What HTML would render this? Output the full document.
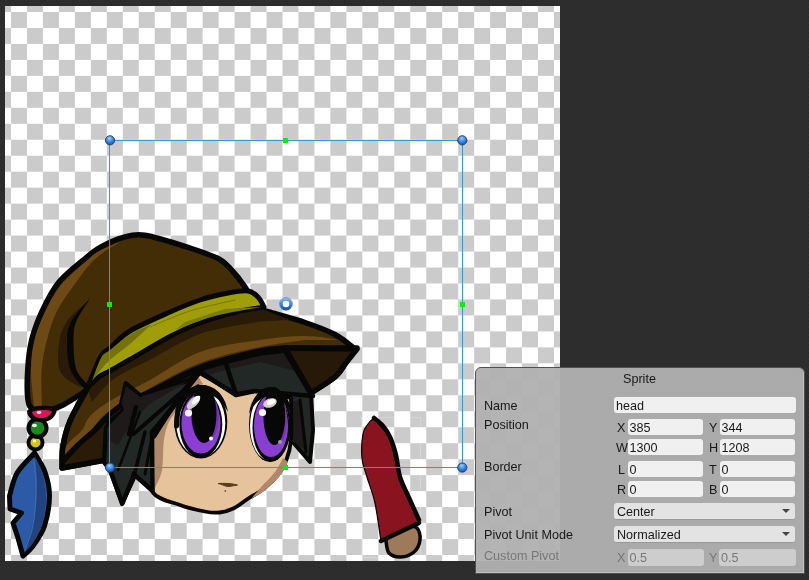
<!DOCTYPE html>
<html><head><meta charset="utf-8">
<style>
*{margin:0;padding:0;box-sizing:border-box}
html,body{width:809px;height:580px;overflow:hidden}
body{position:relative;font-family:"Liberation Sans",sans-serif;
background:#2d2d2d;
background-image:repeating-linear-gradient(45deg,#2f2f2f 0px,#2f2f2f 1.5px,#2a2a2a 1.5px,#2a2a2a 2.83px);}
#checker{position:absolute;left:5px;top:6px;width:555px;height:555px;background:#fff}
svg{position:absolute;left:0;top:0}
#panel{position:absolute;left:475px;top:367px;width:330px;height:207px;
background:rgba(177,177,177,0.955);border:1px solid #505050;border-radius:6px 6px 0 0;box-shadow:inset -1px -1px 0 rgba(255,255,255,0.25)}
#ui{position:absolute;left:0;top:0;width:809px;height:580px;font-size:12.6px;color:#181818}
.t{position:absolute;white-space:nowrap;line-height:14px;transform:translateZ(0)}
.dis{color:#777}
.f{position:absolute;background:#f0f0f0;border-radius:3px}
.fd{background:#cdcdcd}
.dd{position:absolute;background:#e3e3e3;border-radius:3px;border-bottom:1px solid #999}
.arr{position:absolute;width:0;height:0;border-left:4px solid transparent;border-right:4px solid transparent;border-top:4.5px solid #444}
</style></head><body>
<svg width="809" height="580" viewBox="0 0 809 580">
 <defs><pattern id="ck" patternUnits="userSpaceOnUse" x="282.5" y="283.5" width="31.94" height="31.94"><rect width="31.94" height="31.94" fill="#fff"/><rect width="15.97" height="15.97" fill="#cbcbcb"/><rect x="15.97" y="15.97" width="15.97" height="15.97" fill="#cbcbcb"/></pattern></defs>
 <rect x="5" y="6" width="555" height="555" fill="url(#ck)"/>
 <!--CHAR-->
<path d="M104.0,462.0 L104.0,426.0 L124.0,411.0 L150.0,394.0 C158.3,389.7 181.7,375.0 200.0,368.0 C218.3,361.0 250.0,354.7 260.0,352.0 L285.0,349.0 L311.0,393.0 L313.0,430.0 C312.5,435.3 310.5,456.7 310.0,462.0 L291.0,440.0 L260.0,440.0 L200.0,460.0 L160.0,470.0 L135.0,476.0 L122.0,504.0 L110.0,470.0 Z" fill="#222826" stroke="#070806" stroke-width="4" stroke-linejoin="round" stroke-linecap="round" />
<path d="M291.0,402.0 L300.0,400.0 L305.0,450.0 L291.0,440.0 Z" fill="#1d1a19" />
<path d="M300,400 L306,452" fill="none" stroke="#070806" stroke-width="3" stroke-linejoin="round" stroke-linecap="round"/>
<path d="M150.0,394.0 C158.3,389.7 181.7,375.0 200.0,368.0 C218.3,361.0 245.8,355.2 260.0,352.0 C274.2,348.8 280.8,349.5 285.0,349.0 L300.0,372.0 L260.0,362.0 C250.0,364.7 216.7,371.0 200.0,378.0 C183.3,385.0 169.2,395.3 160.0,404.0 C150.8,412.7 147.5,425.7 145.0,430.0 Z" fill="#1d1a19" />
<path d="M152.0,432.0 C153.0,430.8 154.2,429.7 158.0,425.0 C161.8,420.3 168.3,412.8 175.0,404.0 C181.7,395.2 194.2,377.3 198.0,372.0 L236,394 L255,391 L291,398 291.0,398.0 C291.0,405.0 291.8,429.5 291.0,440.0 C290.2,450.5 288.3,455.0 286.0,461.0 C283.7,467.0 281.0,471.2 277.0,476.0 C273.0,480.8 266.7,486.3 262.0,490.0 C257.3,493.7 253.6,495.0 249.0,498.0 C244.4,501.0 239.3,505.6 234.4,508.0 C229.5,510.4 224.6,511.9 219.6,512.5 C214.6,513.1 211.3,512.8 204.7,511.5 C198.1,510.2 188.7,508.2 180.0,505.0 C171.3,501.8 157.3,499.5 152.6,492.0 C147.9,484.5 152.1,470.0 152.0,460.0 C151.9,450.0 152.0,436.7 152.0,432.0 Z" fill="#e6c39a" stroke="#070806" stroke-width="3.8" stroke-linejoin="round" stroke-linecap="round" />
<path d="M154.0,432.0 C155.0,431.0 156.3,430.3 160.0,426.0 C163.7,421.7 169.7,414.3 176.0,406.0 C182.3,397.7 194.3,381.0 198.0,376.0 L203.0,384.0 L185.0,402.0 C182.5,405.0 173.5,413.7 170.0,420.0 C166.5,426.3 165.3,431.7 164.0,440.0 C162.7,448.3 163.5,462.0 162.0,470.0 C160.5,478.0 156.2,485.0 155.0,488.0 Z" fill="#b08868" />
<path d="M288.0,462.0 C286.5,464.5 283.0,472.2 279.0,477.0 C275.0,481.8 268.7,487.3 264.0,491.0 C259.3,494.7 253.2,497.7 251.0,499.0 L262.0,486.0 C264.2,483.7 271.5,476.7 275.0,472.0 C278.5,467.3 281.7,460.3 283.0,458.0 Z" fill="#b08868" />
<path d="M199,371 L236,395 L255,391 L313,396" fill="none" stroke="#070806" stroke-width="4.5" stroke-linejoin="round" stroke-linecap="round"/>
<path d="M226,364 L236,394" fill="none" stroke="#070806" stroke-width="4.5" stroke-linejoin="round" stroke-linecap="round"/>
<ellipse cx="200.8" cy="422" rx="26.5" ry="36.5" fill="#070806"/>
<ellipse cx="200.8" cy="423" rx="24.5" ry="34" fill="#fff"/>
<ellipse cx="200.8" cy="424.5" rx="21.5" ry="33.5" fill="#070806"/>
<ellipse cx="201" cy="423.5" rx="19.5" ry="30" fill="#8b3fd2"/>
<ellipse cx="205" cy="417" rx="14" ry="25" fill="#7433b8"/>
<ellipse cx="204" cy="414" rx="12.5" ry="29" fill="#070806"/>
<path d="M175,412 C178,394 190,385 202,385 C214,385 225,394 228,412 C222,400 212,393 202,393 C190,393 181,400 175,412 Z" fill="#070806" />
<path d="M176.5,426.0 C176.8,423.3 176.9,415.0 178.5,410.0 C180.1,405.0 182.8,399.8 186.0,396.0 C189.2,392.2 196.0,388.5 198.0,387.0" fill="none" stroke="#070806" stroke-width="5" stroke-linejoin="round" stroke-linecap="round"/>
<ellipse cx="193.5" cy="402.5" rx="8.5" ry="4" fill="#cfcfcf" transform="rotate(-45 193.5 402.5)"/>
<ellipse cx="196" cy="400" rx="5.5" ry="2.5" fill="#fff" transform="rotate(-45 196 400)"/>
<circle cx="188.5" cy="413" r="3.6" fill="#fff"/>
<circle cx="211" cy="438.5" r="2" fill="#fff"/>
<ellipse cx="270" cy="424.5" rx="21" ry="37.5" fill="#070806"/>
<ellipse cx="269.5" cy="426" rx="19.5" ry="34.5" fill="#fff"/>
<ellipse cx="271" cy="427.5" rx="18.5" ry="34" fill="#070806"/>
<ellipse cx="271" cy="426" rx="17" ry="31" fill="#8b3fd2"/>
<ellipse cx="276" cy="420" rx="11" ry="25" fill="#7433b8"/>
<ellipse cx="274.3" cy="416" rx="10.9" ry="29" fill="#070806"/>
<path d="M249,414 C251,398 260,388 271,388 C282,388 290,398 292,414 C286,403 280,396 271,396 C262,396 254,403 249,414 Z" fill="#070806" />
<ellipse cx="270" cy="403" rx="7" ry="4.5" fill="#cfcfcf" transform="rotate(-20 270 403)"/>
<ellipse cx="271" cy="402" rx="4.5" ry="2.5" fill="#fff" transform="rotate(-20 271 402)"/>
<circle cx="262.5" cy="412.5" r="3.6" fill="#fff"/>
<circle cx="280" cy="442" r="2" fill="#9a9a9a"/>
<path d="M218,483.5 C222,484 226,487 229,486.5 C232,486 235,485.5 237.5,485 C232,483.5 226,483 218,483.5 Z" fill="#5a3a20" stroke="#5a3a20" stroke-width="1"/>
<circle cx="225.3" cy="491" r="0.9" fill="#7a5a40"/>
<path d="M50.0,410.0 C47.2,409.8 37.2,410.7 33.5,409.0 C29.8,407.3 29.0,406.5 28.0,400.0 C27.0,393.5 27.1,380.0 27.7,370.0 C28.3,360.0 29.3,349.8 31.7,340.0 C34.1,330.2 37.7,320.7 42.2,311.0 C46.8,301.3 51.6,290.9 59.0,282.0 C66.3,273.1 79.3,263.3 86.3,257.5 C93.3,251.7 95.0,250.3 101.0,247.0 C107.0,243.7 115.2,239.7 122.5,237.7 C129.8,235.7 133.6,233.5 144.8,235.2 C156.1,236.9 177.6,244.0 190.0,248.0 C202.4,252.0 212.1,255.3 219.0,259.0 C225.9,262.7 227.3,265.4 231.6,270.0 C235.9,274.6 240.5,280.3 244.7,286.5 C248.9,292.7 254.9,303.6 257.0,307.0 L90.0,386.0 L84.0,392.0 C80.5,394.2 68.7,402.0 63.0,405.0 C57.3,408.0 52.2,409.2 50.0,410.0 Z" fill="#432d06" stroke="#070806" stroke-width="5.5" stroke-linejoin="round" stroke-linecap="round" />
<path d="M34.0,407.0 C33.5,400.8 30.9,381.2 31.0,370.0 C31.1,358.8 32.2,349.5 34.5,340.0 C36.8,330.5 40.1,322.2 44.5,313.0 C48.9,303.8 53.8,293.8 61.0,285.0 C68.2,276.2 81.0,265.8 87.5,260.0 C94.0,254.2 94.2,253.7 100.0,250.5 C105.8,247.3 118.3,242.6 122.0,241.0 L105.0,251.0 C102.7,253.0 95.7,258.0 91.0,263.0 C86.3,268.0 82.7,273.0 77.0,281.0 C71.3,289.0 62.0,301.2 57.0,311.0 C52.0,320.8 49.6,330.2 47.0,340.0 C44.4,349.8 42.4,359.0 41.6,370.0 C40.8,381.0 41.9,400.0 42.0,406.0 Z" fill="#6d4915" />
<path d="M89.0,300.0 C85.5,303.3 72.9,313.3 68.0,320.0 C63.1,326.7 60.9,331.7 59.5,340.0 C58.1,348.3 56.8,362.5 59.5,370.0 C62.2,377.5 71.2,382.2 76.0,385.0 C80.8,387.8 86.0,386.7 88.0,387.0 L73.7,370.0 C73.1,365.0 70.1,348.3 70.0,340.0 C69.9,331.7 69.8,326.7 73.0,320.0 C76.2,313.3 86.3,303.3 89.0,300.0 Z" fill="#2a1b08" />
<path d="M90.5,298.0 C87.4,301.7 75.9,313.0 72.0,320.0 C68.1,327.0 67.2,331.7 67.0,340.0 C66.8,348.3 67.3,361.7 70.5,370.0 C73.7,378.3 82.8,387.2 86.0,390.0 C89.2,392.8 91.6,390.3 90.0,387.0 C88.4,383.7 79.2,377.8 76.5,370.0 C73.8,362.2 73.5,348.2 73.5,340.0 C73.5,331.8 73.7,328.0 76.5,321.0 C79.3,314.0 88.2,301.8 90.5,298.0" fill="#070806" />
<path d="M62.0,468.0 C62.2,464.3 61.7,453.8 63.0,446.0 C64.3,438.2 65.8,430.8 70.0,421.0 C74.2,411.2 85.0,392.7 88.0,387.0 L110.0,370.0 C113.3,368.0 120.0,363.8 130.0,358.0 C140.0,352.2 158.3,341.0 170.0,335.0 C181.7,329.0 188.3,326.3 200.0,322.0 C211.7,317.7 230.3,311.2 240.0,309.0 C249.7,306.8 255.0,309.0 258.0,309.0 L269.0,312.0 C275.0,313.8 294.0,318.8 305.0,322.5 C316.0,326.2 326.7,330.1 335.0,334.5 C343.3,338.9 351.7,346.6 355.0,349.0 L345.0,364.0 C343.3,366.2 340.7,372.2 335.0,377.0 C329.3,381.8 315.0,390.3 311.0,393.0 L285.0,350.0 L260.0,353.0 C250.0,355.7 218.3,362.2 200.0,369.0 C181.7,375.8 162.7,387.0 150.0,394.0 C137.3,401.0 128.3,408.2 124.0,411.0 L104.0,426.0 L104.0,460.0 Z" fill="#432d06" stroke="#070806" stroke-width="5.5" stroke-linejoin="round" stroke-linecap="round" />
<path d="M88.0,390.0 C91.5,386.9 102.0,376.6 109.0,371.5 C116.0,366.4 119.8,365.3 130.0,359.5 C140.2,353.7 158.3,342.6 170.0,336.5 C181.7,330.4 188.3,327.3 200.0,323.0 C211.7,318.7 229.7,312.8 240.0,310.5 C250.3,308.2 258.3,309.2 262.0,309.0 L290.0,320.0 L260.0,321.6 C250.0,323.7 218.3,327.6 200.0,334.0 C181.7,340.4 161.7,353.8 150.0,359.7 C138.3,365.6 136.7,365.9 130.0,369.6 C123.3,373.3 116.3,376.6 110.0,382.0 C103.7,387.4 95.0,398.7 92.0,402.0 Z" fill="#2a1b08" />
<path d="M63.0,458.0 C63.7,455.8 63.8,449.7 67.0,445.0 C70.2,440.3 78.0,435.0 82.0,430.0 C86.0,425.0 85.5,420.3 91.0,415.0 C96.5,409.7 105.2,403.8 115.0,398.0 C124.8,392.2 135.8,387.7 150.0,380.0 C164.2,372.3 181.7,358.7 200.0,352.0 C218.3,345.3 242.5,342.7 260.0,340.0 C277.5,337.3 291.7,336.0 305.0,336.0 C318.3,336.0 334.2,339.3 340.0,340.0 L305.0,340.0 C297.5,341.2 277.5,343.2 260.0,347.0 C242.5,350.8 218.3,356.2 200.0,363.0 C181.7,369.8 162.7,381.3 150.0,388.0 C137.3,394.7 131.7,398.5 124.0,403.0 C116.3,407.5 109.5,410.5 104.0,415.0 C98.5,419.5 95.8,425.0 91.0,430.0 C86.2,435.0 79.5,440.0 75.0,445.0 C70.5,450.0 65.8,457.5 64.0,460.0 Z" fill="#6d4915" />
<path d="M64.0,460.0 L78.0,445.0 L95.0,430.0 L106.0,422.0 L106.0,460.0 L62.0,469.0 Z" fill="#2a1b08" />
<path d="M64.0,460.0 C66.3,457.5 72.8,450.0 78.0,445.0 C83.2,440.0 89.8,435.0 95.0,430.0 C100.2,425.0 104.2,419.3 109.0,415.0 C113.8,410.7 117.2,407.8 124.0,404.0 C130.8,400.2 137.3,398.1 150.0,392.0 C162.7,385.9 181.7,374.3 200.0,367.5 C218.3,360.7 245.8,354.2 260.0,351.0 C274.2,347.8 280.8,348.5 285.0,348.0 L357,348" fill="none" stroke="#070806" stroke-width="5.5" stroke-linejoin="round" stroke-linecap="round"/>
<path d="M88.0,387.0 C85.0,392.7 74.2,411.2 70.0,421.0 C65.8,430.8 64.3,438.2 63.0,446.0 C61.7,453.8 62.2,464.3 62.0,468.0 L106,460" fill="none" stroke="#070806" stroke-width="5.5" stroke-linejoin="round" stroke-linecap="round"/>
<path d="M285.0,348.0 L357.0,349.0 L345.0,364.0 C343.3,366.2 340.7,372.2 335.0,377.0 C329.3,381.8 315.0,390.3 311.0,393.0 Z" fill="#261907" stroke="#070806" stroke-width="5.5" stroke-linejoin="round" stroke-linecap="round" />
<path d="M89.0,384.0 C91.0,379.3 97.5,362.0 101.0,356.0 C104.5,350.0 105.2,352.2 110.0,348.0 C114.8,343.8 120.0,337.0 130.0,331.0 C140.0,325.0 158.3,317.2 170.0,312.0 C181.7,306.8 190.3,303.2 200.0,300.0 C209.7,296.8 220.0,294.5 228.0,293.0 C236.0,291.5 243.0,290.3 248.0,291.0 C253.0,291.7 255.3,294.3 258.0,297.0 C260.7,299.7 263.0,305.3 264.0,307.0 L240.0,311.0 C233.3,313.0 211.7,318.8 200.0,323.0 C188.3,327.2 181.7,330.4 170.0,336.5 C158.3,342.6 140.2,353.7 130.0,359.5 C119.8,365.3 114.0,368.8 109.0,371.5 C104.0,374.2 103.0,373.9 100.0,376.0 C97.0,378.1 92.5,382.7 91.0,384.0 Z" fill="#9f9d08" stroke="#070806" stroke-width="5" stroke-linejoin="round" stroke-linecap="round" />
<path d="M92.0,381.0 C93.5,377.2 98.0,363.2 101.0,358.0 C104.0,352.8 105.2,353.9 110.0,350.0 C114.8,346.1 123.0,338.8 130.0,334.5 C137.0,330.2 148.3,325.8 152.0,324.0 L130.0,344.0 C126.7,346.7 115.2,355.3 110.0,360.0 C104.8,364.7 102.0,368.5 99.0,372.0 C96.0,375.5 93.2,379.5 92.0,381.0 Z" fill="#74720a" />
<path d="M175.0,330.0 C181.7,327.7 200.5,319.8 215.0,316.0 C229.5,312.2 254.2,308.5 262.0,307.0 L225.0,309.0 C218.3,311.2 191.7,319.8 185.0,322.0 Z" fill="#7e7c08" />
<path d="M150.0,327.0 C156.7,324.3 175.8,315.5 190.0,311.0 C204.2,306.5 227.5,301.8 235.0,300.0" fill="none" stroke="#7a7808" stroke-width="1" stroke-linejoin="round" stroke-linecap="round"/>
<path d="M104.0,462.0 L106.0,428.0 L124.7,409.0 L121.3,403.5 L125.8,383.4 L140.4,395.7 L189.7,380.0 L200.0,372.0 L175.0,404.0 L158.0,425.0 L152.0,432.0 L152.6,491.0 L133.6,474.0 L132.5,478.7 L122.4,503.3 L110.0,470.0 Z" fill="#222826" stroke="#070806" stroke-width="4.5" stroke-linejoin="round" stroke-linecap="round" />
<path d="M107.0,428.0 L124.0,410.0 L121.5,403.0 L126.0,386.0 L140.0,397.0 L186.0,382.0 L150.0,404.0 L133.0,420.0 L118.0,445.0 L107.0,440.0 Z" fill="#1d1a19" />
<path d="M136,407 L129,434" fill="none" stroke="#070806" stroke-width="4.5" stroke-linejoin="round" stroke-linecap="round"/>
<path d="M145,432 L134,476" fill="none" stroke="#070806" stroke-width="3.5" stroke-linejoin="round" stroke-linecap="round"/>
<path d="M153,432 L145,474" fill="none" stroke="#070806" stroke-width="3" stroke-linejoin="round" stroke-linecap="round"/>
<path d="M133.6,434 L187.4,387" fill="none" stroke="#070806" stroke-width="4" stroke-linejoin="round" stroke-linecap="round"/>
<path d="M154.0,436.0 C156.0,432.8 161.3,424.0 166.0,417.0 C170.7,410.0 176.7,401.5 182.0,394.0 C187.3,386.5 195.3,375.7 198.0,372.0" fill="none" stroke="#070806" stroke-width="5" stroke-linejoin="round" stroke-linecap="round"/>
<path d="M140,412 L118,470" fill="none" stroke="#070806" stroke-width="2.5" stroke-linejoin="round" stroke-linecap="round"/>
<!--/CHAR-->
<!--EXTRA-->
<path d="M34.5,453.0 C36.2,456.2 42.5,464.8 45.0,472.0 C47.5,479.2 49.6,487.0 49.5,496.0 C49.4,505.0 47.2,517.7 44.5,526.0 C41.8,534.3 36.6,541.0 33.0,546.0 C29.4,551.0 24.7,554.3 23.0,556.0 L18.0,538.0 C17.2,535.5 13.8,525.5 13.0,523.0 L21.5,513.0 L10.0,509.0 L9.5,496.0 C10.8,492.2 12.8,480.2 17.0,473.0 C21.2,465.8 31.6,456.3 34.5,453.0 Z" fill="#2d5aa6" stroke="#070806" stroke-width="5" stroke-linejoin="round" stroke-linecap="round"/>
<path d="M35.0,456.0 C36.3,459.2 41.2,467.7 43.0,475.0 C44.8,482.3 46.2,491.7 46.0,500.0 C45.8,508.3 44.2,517.8 42.0,525.0 C39.8,532.2 36.0,538.3 33.0,543.0 C30.0,547.7 25.5,551.3 24.0,553.0 L31.0,530.0 C31.8,525.8 35.0,513.3 36.0,505.0 C37.0,496.7 36.8,484.2 37.0,480.0 Z" fill="#22437e"/>
<path d="M34.0,460.0 C34.3,465.0 36.2,479.2 36.0,490.0 C35.8,500.8 34.8,515.0 33.0,525.0 C31.2,535.0 26.3,545.8 25.0,550.0" fill="none" stroke="#3a6ab8" stroke-width="1.2" stroke-linejoin="round" stroke-linecap="round"/>
<circle cx="35.5" cy="442.5" r="9" fill="#070806"/>
<circle cx="35.5" cy="442.5" r="5" fill="#d6c414"/>
<circle cx="34.5" cy="441" r="1.6" fill="#fffbc0"/>
<circle cx="37.5" cy="428" r="11" fill="#070806"/>
<circle cx="37.5" cy="428" r="6.8" fill="#1b8a1b"/>
<ellipse cx="34.5" cy="425.5" rx="2.6" ry="1.8" fill="#e8ffe8"/>
<path d="M27,411 C30,405 52,404 57,409 C56,418 49,422 42,422 C34,422 27,418 27,411 Z" fill="#070806"/>
<path d="M32,412 C36,409.5 48,409.5 52,411.5 C50,416 46,418 42,418 C36,418 33,416 32,412 Z" fill="#d8175a"/>
<ellipse cx="39" cy="412.5" rx="2.5" ry="1.4" fill="#ffd8e6"/>
<rect x="361.5" y="417.5" width="59" height="140" fill="none" stroke="#ffffff" stroke-width="1" opacity="0.22"/>
<path d="M386.0,541.0 C387.0,539.2 388.8,532.5 392.0,530.0 C395.2,527.5 400.8,526.3 405.0,526.0 C409.2,525.7 414.5,525.7 417.0,528.0 C419.5,530.3 420.5,536.0 420.0,540.0 C419.5,544.0 417.2,549.2 414.0,552.0 C410.8,554.8 405.2,556.8 401.0,557.0 C396.8,557.2 391.5,555.7 389.0,553.0 C386.5,550.3 386.5,543.0 386.0,541.0" fill="#9c7a5a" stroke="#070806" stroke-width="3.5" stroke-linejoin="round" stroke-linecap="round"/>
<path d="M381.0,541.0 C380.0,534.7 377.3,513.7 375.0,503.0 C372.7,492.3 369.2,484.5 367.0,477.0 C364.8,469.5 362.7,465.2 362.0,458.0 C361.3,450.8 362.0,439.7 363.0,434.0 C364.0,428.3 366.2,426.7 368.0,424.0 C369.8,421.3 373.0,419.0 374.0,418.0 L390.0,437.0 C391.7,443.7 395.2,463.2 400.0,477.0 C404.8,490.8 415.8,512.8 419.0,520.0 L419.0,523.0 Z" fill="#8a1320" stroke="#070806" stroke-width="1.3" stroke-linejoin="round" stroke-linecap="round"/>
<path d="M374.0,418.0 C375.5,419.3 380.3,422.8 383.0,426.0 C385.7,429.2 387.8,432.2 390.0,437.0 C392.2,441.8 394.3,448.3 396.0,455.0 C397.7,461.7 397.7,469.5 400.0,477.0 C402.3,484.5 406.8,492.8 410.0,500.0 C413.2,507.2 417.5,516.7 419.0,520.0" fill="none" stroke="#070806" stroke-width="4.5" stroke-linejoin="round" stroke-linecap="round"/>
<path d="M381,541 L419,523" fill="none" stroke="#070806" stroke-width="4.5" stroke-linejoin="round" stroke-linecap="round"/>
<!--/EXTRA-->
 <!--SEL-->
 <defs>
  <radialGradient id="hb" cx="0.45" cy="0.3" r="0.7">
   <stop offset="0" stop-color="#a0d0ff"/><stop offset="0.5" stop-color="#3a8af5"/><stop offset="1" stop-color="#0650d0"/>
  </radialGradient>
  <linearGradient id="hr" x1="0" y1="0" x2="0" y2="1">
   <stop offset="0" stop-color="#6ab0ff"/><stop offset="1" stop-color="#0a5ad0"/>
  </linearGradient>
 </defs>
 <rect x="109.5" y="140.5" width="353" height="327" fill="none" stroke="#3898d6" stroke-width="1.05"/>
 <g stroke="#3a3a3a" stroke-width="0.9">
  <circle cx="110" cy="140.3" r="4.6" fill="url(#hb)"/>
  <circle cx="462.3" cy="140.3" r="4.6" fill="url(#hb)"/>
  <circle cx="110" cy="467.6" r="4.6" fill="url(#hb)"/>
  <circle cx="462.3" cy="467.6" r="4.6" fill="url(#hb)"/>
 </g>
 <g fill="#00f000">
  <rect x="283" y="138" width="5" height="5"/>
  <rect x="107" y="302" width="5" height="5"/>
  <rect x="460" y="302" width="5" height="5"/>
  <rect x="283" y="465" width="5" height="5"/>
 </g>
 <circle cx="286" cy="304" r="6.4" fill="none" stroke="#5a5550" stroke-width="0.8" opacity="0.6"/>
 <circle cx="286" cy="304" r="4.8" fill="none" stroke="url(#hr)" stroke-width="3"/>

<!--/SEL-->
</svg>
<div id="panel"></div>
<div id="ui">
 <div class="t" style="left:623px;top:371.7px">Sprite</div>
 <div class="t" style="left:484px;top:398.6px">Name</div>
 <div class="t" style="left:484px;top:417.7px">Position</div>
 <div class="t" style="left:484px;top:460.4px">Border</div>
 <div class="t" style="left:484px;top:504.7px">Pivot</div>
 <div class="t" style="left:484px;top:527.8px">Pivot Unit Mode</div>
 <div class="t dis" style="left:484px;top:548.8px">Custom Pivot</div>

 <div class="f" style="left:614px;top:397px;width:182px;height:16px"></div>
 <div class="t" style="left:616px;top:398.5px">head</div>

 <div class="f" style="left:628px;top:419px;width:75px;height:16px"></div>
 <div class="f" style="left:720px;top:419px;width:75px;height:16px"></div>
 <div class="t" style="left:617px;top:420.5px">X</div>
 <div class="t" style="left:629.5px;top:420.5px">385</div>
 <div class="t" style="left:709px;top:420.5px">Y</div>
 <div class="t" style="left:721.5px;top:420.5px">344</div>

 <div class="f" style="left:628px;top:439px;width:75px;height:16px"></div>
 <div class="f" style="left:720px;top:439px;width:75px;height:16px"></div>
 <div class="t" style="left:616px;top:440.5px">W</div>
 <div class="t" style="left:629.5px;top:440.5px">1300</div>
 <div class="t" style="left:709px;top:440.5px">H</div>
 <div class="t" style="left:721.5px;top:440.5px">1208</div>

 <div class="f" style="left:628px;top:461px;width:75px;height:16px"></div>
 <div class="f" style="left:720px;top:461px;width:75px;height:16px"></div>
 <div class="t" style="left:618px;top:462.5px">L</div>
 <div class="t" style="left:629.5px;top:462.5px">0</div>
 <div class="t" style="left:709px;top:462.5px">T</div>
 <div class="t" style="left:721.5px;top:462.5px">0</div>

 <div class="f" style="left:628px;top:481px;width:75px;height:16px"></div>
 <div class="f" style="left:720px;top:481px;width:75px;height:16px"></div>
 <div class="t" style="left:617px;top:482.5px">R</div>
 <div class="t" style="left:629.5px;top:482.5px">0</div>
 <div class="t" style="left:709px;top:482.5px">B</div>
 <div class="t" style="left:721.5px;top:482.5px">0</div>

 <div class="dd" style="left:614px;top:503px;width:181px;height:17px"></div>
 <div class="t" style="left:617px;top:504.7px">Center</div>
 <div class="arr" style="left:782px;top:509px"></div>
 <div class="dd" style="left:614px;top:526px;width:181px;height:17px"></div>
 <div class="t" style="left:617px;top:528.3px">Normalized</div>
 <div class="arr" style="left:782px;top:532px"></div>

 <div class="f fd" style="left:628px;top:549px;width:76px;height:16.5px"></div>
 <div class="f fd" style="left:719px;top:549px;width:77px;height:16.5px"></div>
 <div class="t dis" style="left:617px;top:551.4px">X</div>
 <div class="t dis" style="left:629.5px;top:551.4px">0.5</div>
 <div class="t dis" style="left:709px;top:551.4px">Y</div>
 <div class="t dis" style="left:721px;top:551.4px">0.5</div>
</div>
</body></html>
